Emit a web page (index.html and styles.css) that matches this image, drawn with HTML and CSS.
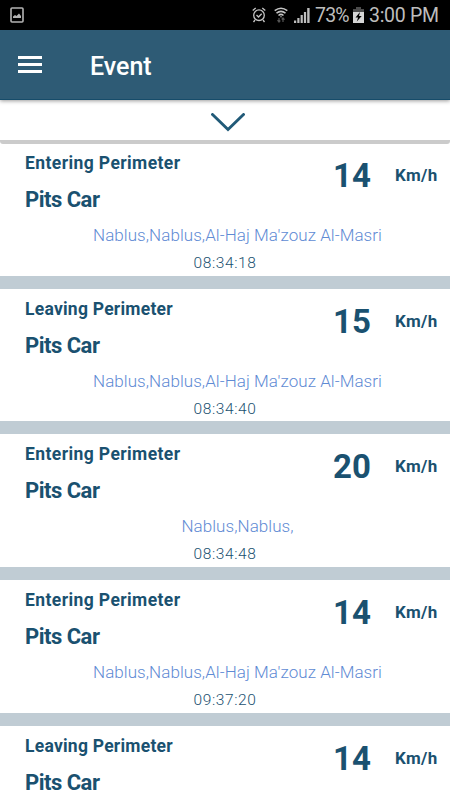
FILE: index.html
```
<!DOCTYPE html>
<html lang="en">
<head>
    <meta charset="UTF-8">
    <meta name="viewport" content="width=device-width, initial-scale=1.0">
    <title>Event</title>
    <link rel="stylesheet" href="styles.css">
</head>
<body>
    <div class="status-bar">
        <svg class="picture-icon" width="14" height="16" viewBox="0 0 14 16">
            <rect x="1" y="1" width="12" height="14" rx="1" fill="none" stroke="#b4b4b4" stroke-width="1.6"/>
            <path d="M3 11V9.5L5 8l1.500 1L9 6.500l2 2.500v2z" fill="#b4b4b4"/>
        </svg>
        <div class="status-right">
            <svg class="alarm-icon" width="14" height="16" viewBox="0 0 14 16" fill="none" stroke="#c4c4c4" stroke-width="1.300">
                <circle cx="7" cy="8.200" r="5.300"/>
                <path d="M4.500 8l2 2 3.200-3.300M.7 3.600L3.700 1M13.300 3.600l-3-2.600M3 13l-1.500 2M11 13l1.500 2"/>
            </svg>
            <svg class="wifi-icon" width="14" height="16" viewBox="0 0 14 16" fill="none" stroke="#c4c4c4" stroke-width="1.500">
                <path d="M.7 3.700Q7-1.300 13.300 3.700M2.500 6.200Q7 2.500 11.500 6.200M4.500 8.500Q7 6.300 9.500 8.500"/>
                <circle cx="7" cy="9.700" r=".7" fill="#c4c4c4" stroke="none"/>
                <path d="M5 11v4M3.500 13.200L5 15l1.300-1.500M9 15v-4M7.700 12.500L9 11l1.500 1.600" stroke="#555" stroke-width="1.200"/>
            </svg>
            <svg class="signal-icon" width="16" height="16" viewBox="0 0 16 16" fill="#bdbdbd">
                <path d="M0 13.500h2.200V16H0zM3.300 11h2.200v5H3.300zM6.600 8h2.200v8H6.600zM9.900 5h2.200v11H9.900zM13.200 1h2.400v15h-2.400z"/>
            </svg>
            <span class="battery-text">73%</span>
            <svg class="battery-icon" width="11" height="16" viewBox="0 0 11 16">
                <path d="M3 0h5v2h3v3H0V2h3z" fill="#4c4c4c"/>
                <path d="M0 5h11v11H0z" fill="#d6d6d6"/>
                <path d="M7 5L2.500 10.500h2.600L3.800 14.500 8.700 9H6z" fill="#000"/>
            </svg>
            <span class="clock">3:00 PM</span>
        </div>
    </div>

    <div class="app-bar">
        <div class="menu-button">
            <span></span>
            <span></span>
            <span></span>
        </div>
        <h1>Event</h1>
    </div>

    <div class="filter-panel">
        <svg width="34" height="19" viewBox="0 0 34 19">
            <path d="M1.500 1.500L17 16.500 32.500 1.500" fill="none" stroke="#215a78" stroke-width="2.900" stroke-linecap="round"/>
        </svg>
    </div>

    <div class="event-list">
        <div class="event">
            <div class="event-top">
                <div class="event-info">
                    <h2><span class="entering">Entering Perimeter</span></h2>
                    <p class="car">Pits Car</p>
                </div>
                <span class="speed">14</span>
                <span class="unit">Km/h</span>
            </div>
            <p class="address">Nablus,Nablus,Al-Haj Ma'zouz Al-Masri</p>
            <p class="time">08:34:18</p>
        </div>
        <div class="event">
            <div class="event-top">
                <div class="event-info">
                    <h2><span class="leaving">Leaving Perimeter</span></h2>
                    <p class="car">Pits Car</p>
                </div>
                <span class="speed">15</span>
                <span class="unit">Km/h</span>
            </div>
            <p class="address">Nablus,Nablus,Al-Haj Ma'zouz Al-Masri</p>
            <p class="time">08:34:40</p>
        </div>
        <div class="event">
            <div class="event-top">
                <div class="event-info">
                    <h2><span class="entering">Entering Perimeter</span></h2>
                    <p class="car">Pits Car</p>
                </div>
                <span class="speed">20</span>
                <span class="unit">Km/h</span>
            </div>
            <p class="address">Nablus,Nablus,</p>
            <p class="time">08:34:48</p>
        </div>
        <div class="event">
            <div class="event-top">
                <div class="event-info">
                    <h2><span class="entering">Entering Perimeter</span></h2>
                    <p class="car">Pits Car</p>
                </div>
                <span class="speed">14</span>
                <span class="unit">Km/h</span>
            </div>
            <p class="address">Nablus,Nablus,Al-Haj Ma'zouz Al-Masri</p>
            <p class="time">09:37:20</p>
        </div>
        <div class="event last">
            <div class="event-top">
                <div class="event-info">
                    <h2><span class="leaving">Leaving Perimeter</span></h2>
                    <p class="car">Pits Car</p>
                </div>
                <span class="speed">14</span>
                <span class="unit">Km/h</span>
            </div>
        </div>
    </div>
</body>
</html>
```

FILE: styles.css
```
* {
    box-sizing: border-box;
}

body {
    margin: 0;
    height: 800px;
    overflow: hidden;
    background: #fff;
    color: #1a5170;
    font-family: Roboto, "Liberation Sans", sans-serif;
    display: flex;
    flex-direction: column;
}

h1, h2, p {
    margin: 0;
    white-space: nowrap;
}

.status-bar {
    height: 30px;
    flex-shrink: 0;
    background: #000;
    color: #bdbdbd;
    display: flex;
    align-items: center;
    justify-content: space-between;
    padding: 0 11px 0 10px;
}

.status-right {
    display: flex;
    align-items: center;
    font-size: 19.5px;
    line-height: 28px;
    white-space: nowrap;
}

.status-right span {
    padding-top: 2px;
}

.wifi-icon {
    margin-left: 8px;
}

.signal-icon {
    margin-left: 6px;
}

.battery-text {
    width: 34px;
    margin-left: 5px;
    letter-spacing: -0.8px;
}

.battery-icon {
    margin-left: 4px;
}

.clock {
    width: 70px;
    margin-left: 5px;
    letter-spacing: -0.3px;
}

.app-bar {
    height: 70px;
    flex-shrink: 0;
    background: #2e5b75;
    border-bottom: 1px solid #164c6a;
    box-shadow: 0 1px 4px rgba(0, 0, 0, 0.4);
    position: relative;
    display: flex;
    align-items: center;
    padding-left: 18px;
}

.menu-button {
    width: 24px;
    display: flex;
    flex-direction: column;
    gap: 4px;
}

.menu-button span {
    height: 3px;
    background: #fff;
}

.app-bar h1 {
    margin: 4px 0 0 48px;
    color: #fff;
    font-size: 25px;
    font-weight: 500;
    line-height: 30px;
}

.filter-panel {
    height: 44px;
    flex-shrink: 0;
    border-bottom: 4px solid #cbcbcb;
    border-radius: 0 0 3px 3px;
    display: flex;
    justify-content: center;
    align-items: center;
    padding: 4px 0 0 5px;
}

.event-list {
    margin-top: -0.9px;
}

.event {
    height: 145.7px;
    border-bottom: 13px solid #c0ccd4;
}

.event.last {
    height: 74px;
    border-bottom: none;
}

.event-top {
    height: 74px;
    display: flex;
    padding-left: 25px;
}

.event-info {
    width: 308px;
    padding-top: 10px;
}

.event-info h2 {
    font-size: 17.5px;
    font-weight: 700;
    line-height: 20px;
}

.entering {
    letter-spacing: 0.4px;
}

.leaving {
    letter-spacing: 0.24px;
}

.car {
    margin-top: 14px;
    font-size: 22px;
    font-weight: 700;
    line-height: 26px;
    letter-spacing: -0.5px;
}

.speed {
    width: 62px;
    font-size: 33px;
    font-weight: 700;
    line-height: 65px;
}

.unit {
    font-size: 17px;
    font-weight: 700;
    line-height: 65px;
    letter-spacing: 0.3px;
}

.address {
    height: 34px;
    padding-left: 25px;
    color: #5f8bd4;
    font-size: 17px;
    font-weight: 300;
    line-height: 36px;
    letter-spacing: 0.06px;
    text-align: center;
}

.time {
    font-size: 15.5px;
    font-weight: 300;
    line-height: 24px;
    letter-spacing: 0.6px;
    text-align: center;
}
```
